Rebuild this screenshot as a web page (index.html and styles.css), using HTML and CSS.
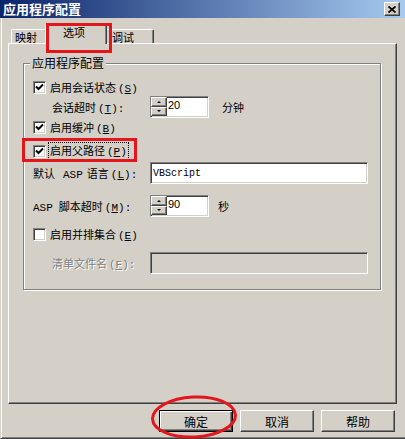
FILE: index.html
```html
<!DOCTYPE html>
<html lang="zh-CN">
<head>
<meta charset="utf-8">
<title>应用程序配置</title>
<link rel="stylesheet" href="styles.css">
</head>
<body>
<div class="window">
  <div class="titlebar">
    <span class="title">应用程序配置</span>
    <span class="close"><svg width="8" height="7" viewBox="0 0 8 7"><path d="M0.5 0.5 L7.5 6.5 M7.5 0.5 L0.5 6.5" stroke="#000" stroke-width="1.7" fill="none"/></svg></span>
  </div>
  <div class="frame">
    <div class="tabs">
      <div class="tab tab-a">映射</div>
      <div class="tab tab-b">选项</div>
      <div class="tab tab-c">调试</div>
    </div>
    <div class="panel">
      <div class="group">
        <div class="legend">应用程序配置</div>
        <div class="row cbrow mt10">
          <span class="cb"><svg width="9" height="9" viewBox="0 0 9 9"><path d="M1 3.5 L3.5 6 L8 1.5" stroke="#000" stroke-width="2" fill="none"/></svg></span>
          <span>启用会话状态<span class="acc">(<u>S</u>)</span></span>
        </div>
        <div class="row frow mt2">
          <span class="lbl indent">会话超时<span class="acc">(<u>T</u>):</span></span>
          <div class="spin">
            <div class="spin-btns"><span class="sb up"></span><span class="sb down"></span></div>
            <span class="val">20</span>
          </div>
          <span class="unit">分钟</span>
        </div>
        <div class="row cbrow mt2">
          <span class="cb"><svg width="9" height="9" viewBox="0 0 9 9"><path d="M1 3.5 L3.5 6 L8 1.5" stroke="#000" stroke-width="2" fill="none"/></svg></span>
          <span>启用缓冲<span class="acc">(<u>B</u>)</span></span>
        </div>
        <div class="row focusrow mt9">
          <span class="cb"><svg width="9" height="9" viewBox="0 0 9 9"><path d="M1 3.5 L3.5 6 L8 1.5" stroke="#000" stroke-width="2" fill="none"/></svg></span>
          <span class="focus">启用父路径<span class="acc">(<u>P</u>)</span></span>
        </div>
        <div class="row frow mt3">
          <span class="lbl">默认<span class="mono word">ASP</span>语言<span class="acc">(<u>L</u>):</span></span>
          <div class="field wide"><span class="mono">VBScript</span></div>
        </div>
        <div class="row frow mt11">
          <span class="lbl"><span class="mono word first">ASP</span>脚本超时<span class="acc">(<u>M</u>):</span></span>
          <div class="spin">
            <div class="spin-btns"><span class="sb up"></span><span class="sb down"></span></div>
            <span class="val">90</span>
          </div>
          <span class="unit unit-s">秒</span>
        </div>
        <div class="row cbrow mt10">
          <span class="cb"></span>
          <span>启用并排集合<span class="acc">(<u>E</u>)</span></span>
        </div>
        <div class="row frow mt11">
          <span class="lbl indent disabled">清单文件名<span class="acc">(<u>F</u>):</span></span>
          <div class="field wide off"></div>
        </div>
      </div>
    </div>
    <div class="actions">
      <button class="btn default">确定</button>
      <button class="btn">取消</button>
      <button class="btn">帮助</button>
    </div>
  </div>
  <div class="mark mark-tab"></div>
  <div class="mark mark-cb"></div>
  <svg class="mark-ellipse" width="92" height="46" viewBox="0 0 92 46"><ellipse cx="44" cy="22" rx="41.5" ry="20" fill="none" stroke="#e3161b" stroke-width="3" transform="rotate(-3 44 22)"/></svg>
</div>
</body>
</html>
```
FILE: styles.css
```css
* { box-sizing: border-box; }
body {
  margin: 0;
  background: #d4d0c8;
  font-family: "Noto Sans CJK SC", "Liberation Sans", sans-serif;
  font-size: 11px;
  color: #000;
}
.window {
  position: relative;
  width: 405px;
  height: 439px;
  background: #d4d0c8;
  display: flex;
  flex-direction: column;
  overflow: hidden;
}
.titlebar {
  flex: none;
  height: 18px;
  background: linear-gradient(to right, #0a246a, #a6caf0);
  display: flex;
  align-items: center;
  justify-content: space-between;
  padding: 0 5px 0 3px;
}
.title {
  color: #fff;
  font-weight: 700;
  font-size: 13px;
  line-height: 14px;
}
.close {
  width: 16px;
  height: 14px;
  background: #d4d0c8;
  border: 1px solid;
  border-color: #fff #404040 #404040 #fff;
  box-shadow: inset -1px -1px #808080;
  display: flex;
  align-items: center;
  justify-content: center;
}
.frame {
  flex: 1;
  border-left: 1px solid #d4d0c8;
  border-bottom: 1px solid #404040;
  box-shadow: inset 1px 0 #fff, inset 0 -1px #808080;
  padding: 6px 10px 0 7px;
}
.tabs {
  display: flex;
  align-items: flex-end;
  height: 19px;
  padding-left: 3px;
}
.tab {
  height: 14px;
  border: 1px solid;
  border-bottom: 0;
  border-color: #fff #404040 transparent #fff;
  box-shadow: inset -1px 0 #808080;
  border-radius: 2px 2px 0 0;
  line-height: 12px;
  padding: 1px 0 0 3px;
  background: #d4d0c8;
}
.tab-a { width: 36px; }
.tab-b {
  position: relative;
  z-index: 1;
  width: 62px;
  height: 20px;
  margin: 0 0 -1px -2px;
  padding: 1px 0 0 17px;
}
.tab-c {
  width: 49px;
  margin-left: -2px;
  padding-left: 6px;
}
.panel {
  width: 389px;
  height: 361px;
  border: 1px solid;
  border-color: #fff #404040 #404040 #fff;
  box-shadow: inset -1px -1px #808080;
  padding: 19px 0 0 14px;
}
.group {
  width: 358px;
  height: 227px;
  border: 1px solid #808080;
  box-shadow: inset 1px 1px #fff, 1px 1px #fff;
  padding: 0 0 0 9px;
}
.legend {
  width: max-content;
  margin: -8px 0 0 -3px;
  padding: 0 2px;
  background: #d4d0c8;
  font-size: 12px;
  line-height: 14px;
}
.row { display: flex; align-items: center; }
.cbrow { height: 14px; }
.focusrow { height: 16px; }
.frow { height: 22px; }
.mt2 { margin-top: 2px; }
.mt3 { margin-top: 3px; }
.mt9 { margin-top: 9px; }
.mt10 { margin-top: 10px; }
.mt11 { margin-top: 11px; }
.cb {
  flex: none;
  width: 13px;
  height: 13px;
  margin-right: 4px;
  background: #fff;
  border: 1px solid;
  border-color: #808080 #fff #fff #808080;
  box-shadow: inset 1px 1px #404040, inset -1px -1px #d4d0c8;
  display: flex;
  align-items: center;
  justify-content: center;
}
.acc {
  margin-left: 2px;
  font-family: "Liberation Mono", monospace;
  font-size: 11px;
}
.focus {
  outline: 1px dotted #000;
  padding: 0 1px;
  line-height: 14px;
  margin-left: -1px;
}
.lbl {
  flex: none;
  width: 117px;
}
.indent { padding-left: 19px; }
.disabled {
  color: #808080;
  text-shadow: 1px 1px 0 #fff;
}
.mono {
  font-family: "Liberation Mono", monospace;
  font-size: 10px;
}
.word {
  font-size: 11px;
  margin: 0 4px 0 8px;
}
.word.first { margin-left: 0; margin-right: 6px; }
.spin {
  width: 59px;
  height: 22px;
  display: flex;
  background: #fff;
  border: 1px solid;
  border-color: #808080 #fff #fff #808080;
  box-shadow: inset 1px 1px #404040, inset -1px -1px #d4d0c8;
}
.spin-btns {
  width: 16px;
  display: flex;
  flex-direction: column;
  padding-bottom: 1px;
}
.sb {
  flex: 1;
  background: #d4d0c8;
  border: 1px solid;
  border-color: #fff #404040 #404040 #fff;
  box-shadow: inset -1px -1px #808080;
  display: flex;
  align-items: center;
  justify-content: center;
}
.sb::after {
  content: "";
  border-style: solid;
  border-color: transparent;
}
.up::after { border-width: 0 2px 2px; border-bottom-color: #000; }
.down::after { border-width: 2px 2px 0; border-top-color: #000; }
.val {
  font-family: "Liberation Sans", sans-serif;
  font-size: 11px;
  line-height: 13px;
  padding: 2px 0 0 1px;
}
.unit { margin-left: 13px; }
.unit-s { margin-left: 9px; }
.field {
  height: 22px;
  background: #fff;
  border: 1px solid;
  border-color: #808080 #fff #fff #808080;
  box-shadow: inset 1px 1px #404040, inset -1px -1px #d4d0c8;
  display: flex;
  align-items: center;
  padding: 0 2px;
}
.wide { width: 218px; }
.off { background: #d4d0c8; }
.actions {
  display: flex;
  justify-content: flex-end;
  gap: 7px;
  margin-top: 6px;
}
.btn {
  width: 74px;
  height: 22px;
  padding: 0;
  font-family: "Noto Sans CJK SC", sans-serif;
  font-size: 12px;
  color: #000;
  background: #d4d0c8;
  border: 1px solid;
  border-color: #fff #404040 #404040 #fff;
  box-shadow: inset -1px -1px #808080;
}
.default {
  border-color: #000;
  box-shadow: inset 1px 1px #fff, inset -1px -1px #404040, inset -2px -2px #808080;
}
.mark {
  position: absolute;
  border: 3px solid #e3161b;
}
.mark-tab { left: 46px; top: 23px; width: 66px; height: 30px; z-index: 2; }
.mark-cb { left: 22px; top: 138px; width: 115px; height: 24px; }
.mark-ellipse { position: absolute; left: 150px; top: 395px; }
```
